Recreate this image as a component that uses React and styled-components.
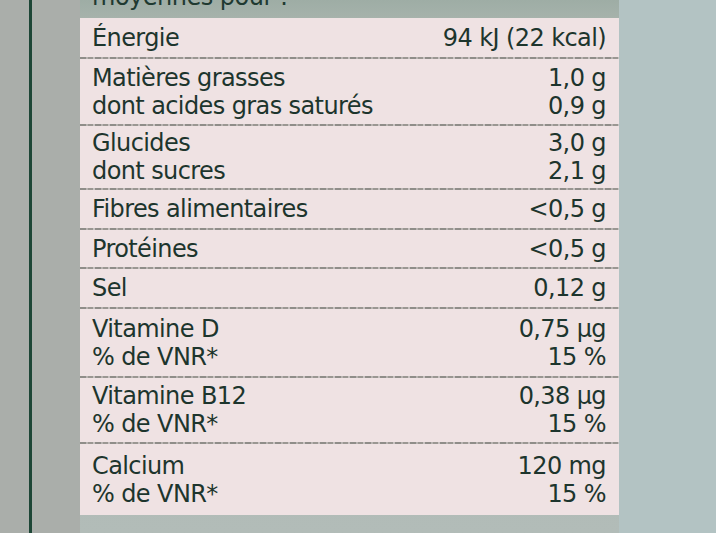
import React from "react";
import styled, { createGlobalStyle } from "styled-components";

const Global = createGlobalStyle`
  html, body { margin: 0; padding: 0; }
  body {
    width: 716px;
    height: 533px;
    overflow: hidden;
    background: #b3c3c3;
    font-family: "DejaVu Sans", "Open Sans", sans-serif;
  }
`;

const Page = styled.div`
  display: flex;
  width: 716px;
  height: 533px;
`;

const LeftMargin = styled.div`
  width: 80px;
  flex: none;
  background: #aaaeaa;
  display: flex;
  padding-left: 29px;
  box-sizing: border-box;
`;

const GreenRule = styled.div`
  width: 3px;
  background: #1d4636;
`;

const Column = styled.div`
  width: 539px;
  flex: none;
  display: flex;
  flex-direction: column;
  background: linear-gradient(#9eada5, #a6b2ab 18px, #b2bcb8 100%);
`;

const TopBand = styled.div`
  height: 18px;
  overflow: hidden;
  padding-left: 12px;
  color: #1f3a31;
  font-size: 24px;
  line-height: 18px;
  letter-spacing: -0.5px;
  & span { display: block; margin-top: -12px; }
`;

const Panel = styled.div`
  background: #efe2e3;
  display: flex;
  flex-direction: column;
  height: 497px;
`;

const Row = styled.div`
  display: flex;
  justify-content: space-between;
  align-items: center;
  padding: 0 13px 0 12px;
  height: ${(p) => p.$h}px;
  box-sizing: border-box;
  color: #1d352d;
  font-size: 24px;
  line-height: 28px;
  letter-spacing: -0.6px;
`;

const Sep = styled.div`
  height: 2px;
  flex: none;
  background:
    repeating-linear-gradient(90deg, #8f8d89 0 6px, #b8b3b1 6px 8px, #9a9792 8px 13px, #c8c2c1 13px 15px);
`;

const Labels = styled.div`
  display: flex;
  flex-direction: column;
`;

const Values = styled.div`
  display: flex;
  flex-direction: column;
  align-items: flex-end;
  text-align: right;
`;

const rows = [
  { h: 39, l: ["Énergie"], v: ["94 kJ (22 kcal)"] },
  { h: 65, l: ["Matières grasses", "dont acides gras saturés"], v: ["1,0 g", "0,9 g"] },
  { h: 62, l: ["Glucides", "dont sucres"], v: ["3,0 g", "2,1 g"] },
  { h: 38, l: ["Fibres alimentaires"], v: ["<0,5 g"] },
  { h: 37, l: ["Protéines"], v: ["<0,5 g"] },
  { h: 38, l: ["Sel"], v: ["0,12 g"] },
  { h: 67, l: ["Vitamine D", "% de VNR*"], v: ["0,75 µg", "15 %"] },
  { h: 64, l: ["Vitamine B12", "% de VNR*"], v: ["0,38 µg", "15 %"] },
  { h: 71, l: ["Calcium", "% de VNR*"], v: ["120 mg", "15 %"] },
];

export default function App() {
  return (
    <>
      <Global />
      <Page>
        <LeftMargin>
          <GreenRule />
        </LeftMargin>
        <Column>
          <TopBand>
            <span>moyennes pour :</span>
          </TopBand>
          <Panel>
            {rows.map((r, i) => (
              <React.Fragment key={i}>
                {i > 0 && <Sep />}
                <Row $h={r.h}>
                  <Labels>
                    {r.l.map((t) => (
                      <span key={t}>{t}</span>
                    ))}
                  </Labels>
                  <Values>
                    {r.v.map((t, j) => (
                      <span key={j}>{t}</span>
                    ))}
                  </Values>
                </Row>
              </React.Fragment>
            ))}
          </Panel>
        </Column>
      </Page>
    </>
  );
}
